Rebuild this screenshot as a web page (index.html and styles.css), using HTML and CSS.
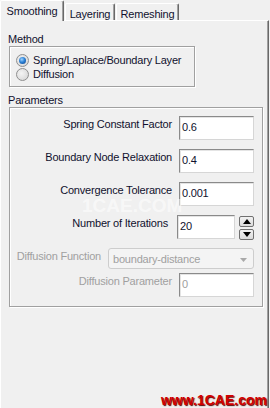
FILE: index.html
```html
<!DOCTYPE html>
<html lang="en">
<head>
    <meta charset="UTF-8">
    <title>Smoothing</title>
    <link rel="stylesheet" href="styles.css">
</head>
<body>
    <!-- tabs -->
    <nav class="tabs">
        <span class="tab tab--on">Smoothing</span>
        <span class="tab">Layering</span>
        <span class="tab">Remeshing</span>
    </nav>

    <!-- page -->
    <section class="panel">
        <div class="legend">Method</div>
        <div class="frame frame--method">
            <label class="radio"><span class="dot dot--on"></span>Spring/Laplace/Boundary Layer</label>
            <label class="radio"><span class="dot"></span>Diffusion</label>
        </div>

        <div class="legend legend--params">Parameters</div>
        <div class="frame frame--params">
            <div class="row">
                <span class="lbl">Spring Constant Factor</span>
                <span class="box">0.6</span>
            </div>
            <div class="row">
                <span class="lbl">Boundary Node Relaxation</span>
                <span class="box">0.4</span>
            </div>
            <div class="row">
                <span class="lbl">Convergence Tolerance</span>
                <span class="box">0.001</span>
            </div>
            <div class="row row--spin">
                <span class="lbl">Number of Iterations</span>
                <span class="box box--short">20</span>
                <span class="spin">
                    <span class="spin__btn"><svg width="8" height="5" viewBox="0 0 8 5"><path d="M0 5 L4 0 L8 5 Z" fill="#000"/></svg></span>
                    <span class="spin__btn"><svg width="8" height="5" viewBox="0 0 8 5"><path d="M0 0 L8 0 L4 5 Z" fill="#000"/></svg></span>
                </span>
            </div>
            <div class="row row--combo">
                <span class="lbl lbl--off">Diffusion Function</span>
                <span class="combo">boundary-distance
                    <svg class="combo__arrow" width="7" height="4" viewBox="0 0 7 4"><path d="M0 0 L7 0 L3.5 4 Z" fill="#a9a9a9"/></svg>
                </span>
            </div>
            <div class="row row--last">
                <span class="lbl lbl--off">Diffusion Parameter</span>
                <span class="box box--off">0</span>
            </div>
        </div>

        <div class="ghost">1CAE.COM</div>
    </section>

    <div class="mark">www.1CAE.com</div>
</body>
</html>
```

FILE: styles.css
```css
* {box-sizing: border-box;}
body {
    margin: 0; width: 270px; height: 408px; overflow: hidden; position: relative;
    background-color: #f0f0f0; color: #10102e;
    font: 11px/13px "Liberation Sans", Arial, sans-serif; letter-spacing: -.2px;
}

/* tabs */
.tabs {display: flex; align-items: flex-end; gap: 1px; height: 21px; margin-bottom: -1px;}
.tab {
    height: 18px; padding-top: 4px; text-align: center; background-color: #f0f0f0;
    border-top: 1px solid #fff; border-left: 1px solid #fff; border-right: 1px solid #696969;
    border-radius: 2px 2px 0 0; box-shadow: inset -1px 0 0 #a0a0a0;
}
.tab:nth-child(1) {width: 64px;}
.tab:nth-child(2) {width: 50px;}
.tab:nth-child(3) {width: 63px;}
.tab--on {height: 21px; position: relative; z-index: 1;}

/* panel */
.panel {
    width: 269px; height: 388px; padding: 12px 0 0 7px;
    border-top: 1px solid #fff; border-left: 1px solid #fff; border-right: 1px solid #696969;
    box-shadow: inset -1px 0 0 #a0a0a0; position: relative;
}
.legend {height: 13px;}
.legend--params {margin-top: 7px;}
.frame {
    margin-left: 1px; border: 1px solid #a0a0a0;
    box-shadow: 1px 1px 0 #fff, inset 1px 1px 0 #fff;
}
.frame--method {width: 186px; height: 41px; padding: 6px 0 0 6px;}
.frame--params {width: 254px; height: 200px; padding: 8px 8px 0 0;}

/* radios */
.radio {display: flex; align-items: center; gap: 4px; height: 14px;}
.dot {
    width: 13px; height: 13px; border-radius: 50%; border: 1px solid #8f8f8f;
    background: radial-gradient(circle at 40% 40%, #f4f4f4 0, #dcdcdc 70%, #c8c8c8 100%);
    display: flex; justify-content: center; align-items: center;
}
.dot--on::after {
    content: ""; width: 7px; height: 7px; border-radius: 50%;
    background: radial-gradient(circle at 40% 35%, #9fd3ff 0, #2c82d6 45%, #0d3f86 100%);
}

/* rows */
.row {display: flex; justify-content: flex-end; align-items: flex-start; gap: 7px; height: 24px; margin-bottom: 9px;}
.row--spin {gap: 0;}
.row--spin .lbl {margin-right: 9px;}
.row--combo {height: 21px; margin-bottom: 4px;}
.lbl {padding-top: 2px; white-space: nowrap;}
.lbl--off {color: #a0a0a0;}
.box {
    width: 75px; height: 24px; padding: 4px 0 0 2px; background-color: #fff;
    border: 1px solid; border-color: #8a8a8a #d6d6d6 #d6d6d6 #8a8a8a;
    box-shadow: inset 1px 1px 0 #e4e4e4;
}
.box--short {width: 58px;}
.box--off {color: #a0a0a0;}

.spin {display: flex; flex-direction: column; gap: 2px; margin: 1px 0 0 4px;}
.spin__btn {
    width: 15px; height: 11px; border: 1px solid #707070; border-radius: 2px;
    background: linear-gradient(#f2f2f2, #dcdcdc);
    display: flex; justify-content: center; align-items: center;
}

.combo {
    width: 146px; height: 21px; padding: 4px 0 0 4px; color: #a0a0a0;
    border: 1px solid #cdcdcd; border-radius: 3px; background-color: #f4f4f4;
    display: flex; justify-content: space-between;
}
.combo__arrow {margin: 5px 6px 0 0;}

/* watermarks */
.ghost {
    position: absolute; left: 81px; top: 175px;
    font: bold 19px/19px "Liberation Sans", Arial, sans-serif; letter-spacing: 0;
    color: rgba(255, 255, 255, .55);
}
.mark {
    position: absolute; right: 3px; bottom: 1px;
    font: bold 14px/14px "Liberation Sans", Arial, sans-serif; letter-spacing: 0;
    color: #d20000; text-shadow: 1px 1px 1px #5a0000;
}
```
